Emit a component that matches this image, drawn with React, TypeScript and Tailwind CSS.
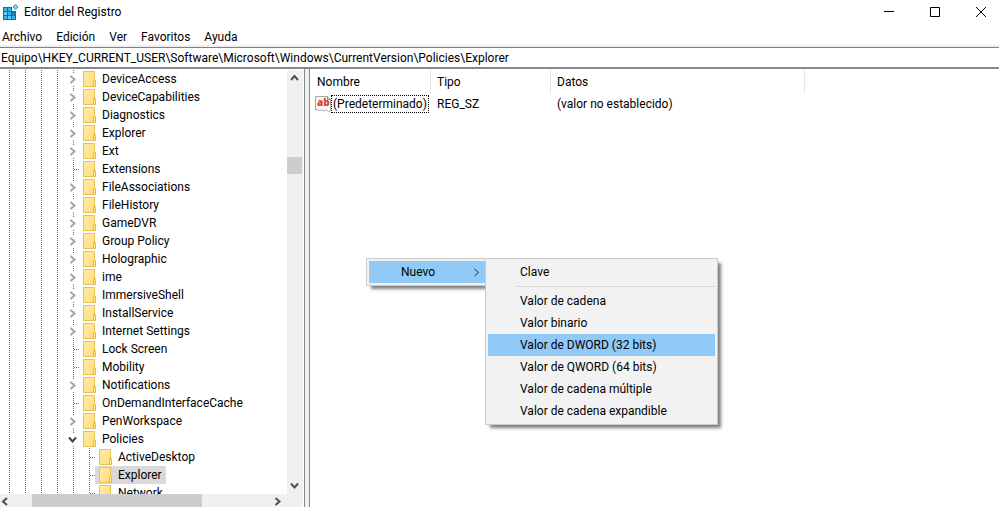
import React from 'react';

interface TreeNode {
  name: string;
  depth: number;
  state: 'closed' | 'open' | 'leaf';
  selected?: boolean;
}

const nodes: TreeNode[] = [
  { name: 'DeviceAccess', depth: 4, state: 'closed' },
  { name: 'DeviceCapabilities', depth: 4, state: 'closed' },
  { name: 'Diagnostics', depth: 4, state: 'closed' },
  { name: 'Explorer', depth: 4, state: 'closed' },
  { name: 'Ext', depth: 4, state: 'closed' },
  { name: 'Extensions', depth: 4, state: 'leaf' },
  { name: 'FileAssociations', depth: 4, state: 'closed' },
  { name: 'FileHistory', depth: 4, state: 'closed' },
  { name: 'GameDVR', depth: 4, state: 'closed' },
  { name: 'Group Policy', depth: 4, state: 'closed' },
  { name: 'Holographic', depth: 4, state: 'closed' },
  { name: 'ime', depth: 4, state: 'closed' },
  { name: 'ImmersiveShell', depth: 4, state: 'closed' },
  { name: 'InstallService', depth: 4, state: 'closed' },
  { name: 'Internet Settings', depth: 4, state: 'closed' },
  { name: 'Lock Screen', depth: 4, state: 'leaf' },
  { name: 'Mobility', depth: 4, state: 'leaf' },
  { name: 'Notifications', depth: 4, state: 'closed' },
  { name: 'OnDemandInterfaceCache', depth: 4, state: 'leaf' },
  { name: 'PenWorkspace', depth: 4, state: 'closed' },
  { name: 'Policies', depth: 4, state: 'open' },
  { name: 'ActiveDesktop', depth: 5, state: 'leaf' },
  { name: 'Explorer', depth: 5, state: 'leaf', selected: true },
  { name: 'Network', depth: 5, state: 'leaf' },
];

const valueTypes = [
  'Valor de cadena',
  'Valor binario',
  'Valor de DWORD (32 bits)',
  'Valor de QWORD (64 bits)',
  'Valor de cadena múltiple',
  'Valor de cadena expandible',
];

const RegeditIcon = () => (
  <svg width="16" height="16" viewBox="0 0 16 16" shapeRendering="crispEdges" aria-hidden="true">
    <path d="M0 3h9v4h4v9H0z" fill="#14709f" />
    <path d="M1 4h3v3H1zM5 4h3v3H5zM5 8h3v3H5zM1 12h3v3H1zM9 12h3v3H9z" fill="#35b4ee" />
    <path d="M1 8h3v3H1zM5 12h3v3H5z" fill="#5fcdfa" />
    <path d="M9 8h3v3H9z" fill="#1581b8" />
    <path d="M12.500.5l2.500 2.500-2.500 2.500L10 3z" fill="#7fd3fb" stroke="#2b93c9" shapeRendering="auto" />
  </svg>
);

const FolderIcon = () => (
  <svg width="13" height="16" viewBox="0 0 13 16" className="shrink-0" aria-hidden="true">
    <defs>
      <linearGradient id="folder" x1="0" y1="0" x2="1" y2="1">
        <stop offset="0" stopColor="#ffeca6" />
        <stop offset="1" stopColor="#fddd7c" />
      </linearGradient>
    </defs>
    <path d="M.5.5h11v15H.5z" fill="url(#folder)" stroke="#e8c353" />
    <path d="M10.500 9.500h2v6h-2z" fill="#ffe79a" stroke="#e8bd3c" />
  </svg>
);

const StringValueIcon = () => (
  <svg width="16" height="16" viewBox="0 0 16 16" className="shrink-0" aria-hidden="true">
    <path d="M.5.5h12l3 3v11l-2 1-2-2-2 1.500-3-1-2 .5-2-1-2 .5z" fill="#fafafa" stroke="#a6a6a6" />
    <path d="M12.500.5v3h3" fill="none" stroke="#8a8a8a" />
    <text x="2" y="10" fontSize="10" fontWeight="800" fill="#d9472b" fontFamily="Open Sans, sans-serif">ab</text>
  </svg>
);

type Direction = 'up' | 'down' | 'left' | 'right';

const chevrons: Record<Direction, string> = {
  up: 'M1 6l3.500-4 3.500 4',
  down: 'M1 2.500l3.500 4 3.500-4',
  left: 'M6 1l-4 3.500 4 3.500',
  right: 'M2.500 1l4 3.500-4 3.500',
};

const Chevron = ({ dir, className }: { dir: Direction; className: string }) => (
  <svg width="9" height="9" viewBox="0 0 9 9" fill="none" stroke="currentColor" className={className} aria-hidden="true">
    <path d={chevrons[dir]} />
  </svg>
);

const dotsY = 'w-px bg-[repeating-linear-gradient(to_bottom,#6e6e6e_0_1px,transparent_1px_2px)]';
const dotsX = 'h-px bg-[repeating-linear-gradient(to_right,#6e6e6e_0_1px,transparent_1px_2px)]';

const TreeRow = ({ node }: { node: TreeNode }) => (
  <li
    role="treeitem"
    aria-level={node.depth + 1}
    aria-selected={!!node.selected}
    aria-expanded={node.state === 'leaf' ? undefined : node.state === 'open'}
    className="flex h-[18px] shrink-0 pl-px whitespace-nowrap"
  >
    {Array.from({ length: node.depth }).map((_, i) => (
      <span key={i} className="flex w-4 shrink-0 pl-2">
        <span className={dotsY} />
      </span>
    ))}
    {node.state === 'leaf' ? (
      <span className="flex w-3.5 shrink-0 items-center pl-2">
        <span className={`h-full ${dotsY}`} />
        <span className={`flex-1 ${dotsX}`} />
      </span>
    ) : (
      <span className="flex w-3.5 shrink-0 flex-col items-center pl-px">
        <span className={`ml-0.5 h-[3px] ${dotsY}`} />
        <button aria-label={node.state === 'open' ? 'Contraer' : 'Expandir'} className="flex flex-1 items-center">
          {node.state === 'open' ? (
            <Chevron dir="down" className="stroke-2 text-[#404040]" />
          ) : (
            <Chevron dir="right" className="stroke-2 text-[#a6a6a6]" />
          )}
        </button>
        <span className={`ml-0.5 h-[2px] ${dotsY}`} />
      </span>
    )}
    <span className={`flex items-center gap-1.5 px-1 ${node.selected ? 'bg-[#d9d9d9]' : ''}`}>
      <FolderIcon />
      {node.name}
    </span>
  </li>
);

const MenuItem = ({ label, active }: { label: string; active?: boolean }) => (
  <button
    role="menuitem"
    className={`block h-[22px] w-full pl-8 text-left hover:bg-[#91c9f7] ${active ? 'bg-[#91c9f7]' : ''}`}
  >
    {label}
  </button>
);

const ContextMenu = () => (
  <div className="absolute top-[258px] left-[366px] flex items-start whitespace-nowrap">
    <div role="menu" className="w-[119px] border border-r-0 border-[#ccc] bg-[#f2f2f2] py-0.5 pl-0.5 shadow-[4px_4px_3px_-1px_rgba(0,0,0,0.5)]">
      <button
        role="menuitem"
        aria-haspopup="menu"
        aria-expanded="true"
        className="flex h-[22px] w-full items-center justify-between bg-[#91c9f7] pr-1 pl-8"
      >
        Nuevo
        <Chevron dir="right" className="text-[#303030]" />
      </button>
    </div>
    <div role="menu" className="relative w-[233px] border border-[#ccc] bg-[#f2f2f2] p-0.5 shadow-[4px_4px_3px_-1px_rgba(0,0,0,0.5)]">
      <MenuItem label="Clave" />
      <div role="separator" className="mt-[3px] mb-[3px] ml-7 h-px bg-[#d5d5d5]" />
      {valueTypes.map((label) => (
        <MenuItem key={label} label={label} active={label === 'Valor de DWORD (32 bits)'} />
      ))}
    </div>
  </div>
);

export default function App() {
  return (
    <div className="relative flex h-screen flex-col overflow-hidden bg-white font-[Roboto,sans-serif] text-xs text-black">
      <header className="flex h-6 shrink-0 items-center justify-between pl-[3px]">
        <div className="flex items-center gap-[5px]">
          <RegeditIcon />
          <h1>Editor del Registro</h1>
        </div>
        <div className="flex gap-2.5">
          <button aria-label="Minimizar" className="flex h-6 w-9 items-center justify-center">
            <svg width="10" height="10" viewBox="0 0 10 10" stroke="currentColor">
              <path d="M0 4.500h10" />
            </svg>
          </button>
          <button aria-label="Maximizar" className="flex h-6 w-9 items-center justify-center">
            <svg width="10" height="10" viewBox="0 0 10 10" fill="none" stroke="currentColor">
              <path d="M.5.5h9v9h-9z" />
            </svg>
          </button>
          <button aria-label="Cerrar" className="flex h-6 w-9 items-center justify-center">
            <svg width="10" height="10" viewBox="0 0 10 10" stroke="currentColor">
              <path d="M0 0l10 10M10 0L0 10" />
            </svg>
          </button>
        </div>
      </header>

      <nav className="flex h-[23px] shrink-0 items-center gap-3.5 border-b-2 border-[#f0f0f0] pt-1 pl-0.5">
        <button>Archivo</button>
        <button>Edición</button>
        <button>Ver</button>
        <button>Favoritos</button>
        <button>Ayuda</button>
      </nav>

      <input
        type="text"
        aria-label="Ruta"
        defaultValue="Equipo\HKEY_CURRENT_USER\Software\Microsoft\Windows\CurrentVersion\Policies\Explorer"
        className="h-[22px] w-full shrink-0 border-t border-b-2 border-t-[#828282] border-b-[#828790] pl-px outline-none"
      />

      <main className="flex min-h-0 flex-1">
        <section className="flex w-[304px] shrink-0 flex-col pt-px pr-px">
          <div className="flex min-h-0 flex-1">
            <ul role="tree" className="min-w-0 flex-1 overflow-hidden">
              {nodes.map((node, i) => (
                <TreeRow key={i} node={node} />
              ))}
            </ul>
            <div className="flex w-4 flex-col bg-[#f0f0f0]">
              <button aria-label="Arriba" className="flex h-[17px] items-center pl-[3px]">
                <Chevron dir="up" className="stroke-2 text-[#505050]" />
              </button>
              <div className="w-full flex-1 pt-[70px] pr-px">
                <div className="h-[17px] bg-[#cdcdcd]" />
              </div>
              <button aria-label="Abajo" className="flex h-[17px] items-center pl-[3px]">
                <Chevron dir="down" className="stroke-2 text-[#505050]" />
              </button>
            </div>
          </div>
          <div className="flex h-[13px] shrink-0 bg-[#f0f0f0] pr-4">
            <button aria-label="Izquierda" className="flex w-8 items-center pt-0.5 pl-px">
              <Chevron dir="left" className="stroke-2 text-[#505050]" />
            </button>
            <div className="flex-1">
              <div className="h-full w-[170px] bg-[#cdcdcd]" />
            </div>
            <button aria-label="Derecha" className="flex w-4 items-center pt-0.5 pl-0.5">
              <Chevron dir="right" className="stroke-2 text-[#505050]" />
            </button>
          </div>
        </section>

        <div className="w-1.5 shrink-0 border-x border-[#828790] bg-[#f0f0f0]" />

        <section className="min-w-0 flex-1 pt-px">
          <table className="w-[495px] table-fixed border-separate border-spacing-0 text-left">
            <thead>
              <tr className="h-6">
                <th className="w-[121px] border-r border-[#e5e5e5] p-0 pl-[7px] font-normal">Nombre</th>
                <th className="w-[120px] border-r border-[#e5e5e5] p-0 pl-1.5 font-normal">Tipo</th>
                <th className="border-r border-[#e5e5e5] p-0 pl-1.5 font-normal">Datos</th>
              </tr>
            </thead>
            <tbody>
              <tr className="h-5">
                <td className="p-0 pl-[5px]">
                  <div className="flex items-center">
                    <StringValueIcon />
                    <span className="h-[18px] border border-dotted border-black px-px whitespace-nowrap">(Predeterminado)</span>
                  </div>
                </td>
                <td className="p-0 pl-1.5">REG_SZ</td>
                <td className="p-0 pl-1.5">(valor no establecido)</td>
              </tr>
            </tbody>
          </table>
        </section>
      </main>

      <ContextMenu />
    </div>
  );
}
